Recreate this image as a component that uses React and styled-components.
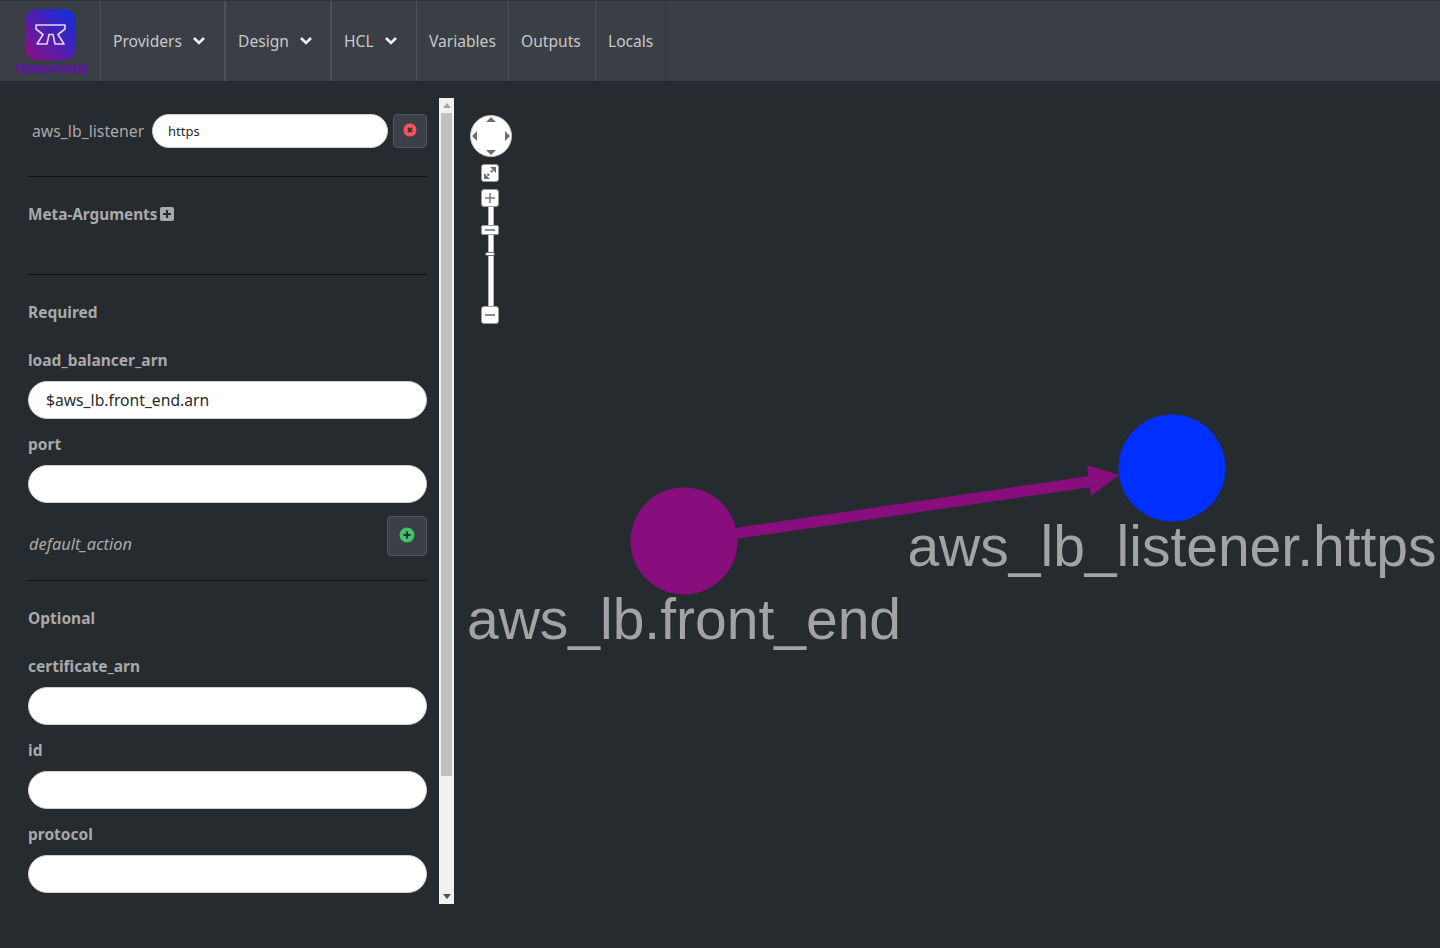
import React from "react";
import styled, { createGlobalStyle } from "styled-components";

const Global = createGlobalStyle`
  html, body {
    margin: 0;
    height: 100%;
    background: #262b2f;
    overflow: hidden;
  }
  * { box-sizing: border-box; }
  body, input {
    font-family: "Noto Sans", "Open Sans", sans-serif;
  }
`;

const Page = styled.div`
  width: 1440px;
  height: 948px;
  display: flex;
  flex-direction: column;
`;

const Navbar = styled.nav`
  height: 82px;
  flex: none;
  display: flex;
  background: #3a3f46;
  border-top: 1px solid #2f3338;
  border-bottom: 1px solid #23272b;
  padding-left: 1px;
`;

const Brand = styled.div`
  width: 99px;
  display: flex;
  flex-direction: column;
  align-items: flex-start;
  padding: 8px 0 0 24px;
`;

const BrandName = styled.div`
  font-family: "Liberation Sans", sans-serif;
  font-size: 10.5px;
  font-weight: 700;
  line-height: 10px;
  color: #5f14a8;
  -webkit-text-stroke: 0.4px #5f14a8;
  margin: 4px 0 0 -10px;
  white-space: nowrap;
`;

const NavItem = styled.div`
  width: ${p => p.$w}px;
  flex: none;
  display: flex;
  align-items: center;
  gap: 10px;
  padding-left: 12px;
  border-left: ${p => (p.$thick ? 2 : 1)}px solid #4d5259;
  font-size: 15.6px;
  color: #c8c8c8;
  &:last-child {
    border-right: 1px solid #33373c;
  }
`;

const Main = styled.div`
  flex: 1;
  display: flex;
  min-height: 0;
`;

const SideColumn = styled.div`
  width: 454px;
  flex: none;
  padding: 16px 0 44px 28px;
  display: flex;
  gap: 12px;
`;

const Side = styled.div`
  width: 399px;
  flex: none;
  overflow: hidden;
  padding-top: 16px;
`;

const ScrollBar = styled.div`
  width: 15px;
  flex: none;
  display: flex;
  flex-direction: column;
  background: #f1f1f1;
`;

const ScrollArrow = styled.div`
  height: 15px;
  flex: none;
  display: flex;
  align-items: center;
  justify-content: center;
`;

const ScrollThumb = styled.div`
  height: 663px;
  margin: 0 2px;
  background: #c1c1c1;
`;

const ScrollRest = styled.div`
  flex: 1;
`;

const NameRow = styled.div`
  display: flex;
  align-items: center;
  height: 34px;
  padding-left: 4px;
`;

const NameLabel = styled.label`
  font-size: 15.8px;
  color: #a9a9a9;
  width: 120px;
  flex: none;
`;

const NameInput = styled.input`
  width: 236px;
  height: 34px;
  border: 1px solid #cfcfcf;
  border-radius: 17px;
  background: #fff;
  padding: 0 15px;
  font-size: 13px;
  color: #272b30;
  outline: none;
`;

const SquareButton = styled.button`
  width: ${p => p.$size}px;
  height: ${p => p.$size}px;
  flex: none;
  display: flex;
  align-items: center;
  justify-content: center;
  margin-left: auto;
  padding: 0 0 2px;
  border: 1px solid #52565e;
  border-radius: 4px;
  background: #3a3f48;
`;

const Rule = styled.hr`
  border: 0;
  height: 1px;
  background: #0e1012;
  margin: ${p => p.$top}px 0 0;
`;

const MetaRow = styled.div`
  display: flex;
  align-items: center;
  gap: 3px;
  margin-top: 26px;
  height: 22px;
  font-size: 15.3px;
  font-weight: 700;
  color: #a9a9a9;
`;

const SectionTitle = styled.div`
  margin-top: ${p => p.$top}px;
  height: 22px;
  line-height: 22px;
  font-size: 15.5px;
  font-weight: 700;
  color: #a9a9a9;
`;

const Field = styled.div`
  margin-top: ${p => p.$top}px;
`;

const FieldLabel = styled.label`
  display: block;
  height: 22px;
  line-height: 22px;
  font-size: 15.5px;
  font-weight: 700;
  color: #a9a9a9;
`;

const FieldInput = styled.input`
  display: block;
  width: 100%;
  height: 38px;
  margin-top: 10px;
  border: 1px solid #cfcfcf;
  border-radius: 19px;
  background: #fff;
  padding: 0 17px;
  font-size: 15.7px;
  color: #272b30;
  outline: none;
`;

const BlockRow = styled.div`
  display: flex;
  justify-content: space-between;
  margin-top: 13px;
`;

const BlockLabel = styled.span`
  padding-top: 16px;
  padding-left: 1px;
  font-size: 16.4px;
  font-style: italic;
  color: #a9a9a9;
`;

const Canvas = styled.div`
  flex: 1;
  position: relative;
  min-width: 0;
`;

const GraphSvg = styled.svg`
  display: block;
  width: 100%;
  height: 100%;
`;

const NavigatorBox = styled.div`
  position: absolute;
  left: 16px;
  top: 33px;
  width: 42px;
  display: flex;
  flex-direction: column;
  align-items: center;
`;

const Pad = styled.svg`
  display: block;
`;

const ZoomColumn = styled.div`
  width: 18px;
  margin-right: 2px;
  display: flex;
  flex-direction: column;
`;

const ZoomBtn = styled.div`
  width: 18px;
  height: 18px;
  background: #fff;
  border: 1px solid #9a9a9a;
  border-radius: 3px;
  display: flex;
  align-items: center;
  justify-content: center;
  position: relative;
  z-index: 1;
  margin-top: ${p => p.$top || 0}px;
`;

const ZoomTrack = styled.div`
  position: relative;
  width: 18px;
  height: 101px;
  margin: -1px 0;
  &::before {
    content: "";
    position: absolute;
    left: 7px;
    top: 0;
    bottom: 0;
    width: 4px;
    background: #fff;
    border-left: 1px solid #b0b0b0;
    border-right: 1px solid #b0b0b0;
  }
`;

const ZoomMark = styled.div`
  position: absolute;
  left: 0;
  top: 19px;
  width: 18px;
  height: 10px;
  background: #fff;
  border: 1px solid #9a9a9a;
  border-radius: 2px;
  display: flex;
  align-items: center;
  justify-content: center;
`;

const ZoomHandle = styled.div`
  position: absolute;
  left: 4px;
  top: 46px;
  width: 10px;
  height: 4px;
  background: #fff;
  border: 1px solid #6f6f6f;
  border-radius: 2px;
`;

const Dash = styled.div`
  width: 10px;
  height: 2px;
  background: #8c8c8c;
`;

const CrossIcon = ({ bg, plus, size = 16 }) => (
  <svg width={size} height={size} viewBox="0 0 16 16">
    <circle cx="8" cy="8" r="7.5" fill={bg} />
    <path
      d={plus ? "M8 4.5v7M4.5 8h7" : "M5.7 5.7l4.6 4.6M10.3 5.7l-4.6 4.6"}
      stroke="#2b2f36"
      strokeWidth="2"
    />
  </svg>
);

const Chevron = () => (
  <svg width="14" height="10" viewBox="0 0 14 10">
    <path d="M2 2l5 5 5-5" fill="none" stroke="#f2f2f2" strokeWidth="2.6" />
  </svg>
);

const PlusSquare = () => (
  <svg width="14" height="14" viewBox="0 0 14 14">
    <rect width="14" height="14" rx="2" fill="#a9a9a9" />
    <path d="M7 3v8M3 7h8" stroke="#272b30" strokeWidth="2.2" />
  </svg>
);

const Triangle = ({ up, color }) => (
  <svg width="8" height="5" viewBox="0 0 8 5">
    <polygon points={up ? "4,0 8,5 0,5" : "0,0 8,0 4,5"} fill={color} />
  </svg>
);

const Logo = () => (
  <svg width="51" height="51" viewBox="0 0 51 51">
    <defs>
      <linearGradient id="logoGrad" x1="1" y1="0" x2="0" y2="1">
        <stop offset="0" stopColor="#0b2fe0" />
        <stop offset="1" stopColor="#8e1183" />
      </linearGradient>
    </defs>
    <rect width="51" height="51" rx="12" fill="url(#logoGrad)" />
    <path
      d="M11 16H40V20L33 25.500L39 35H30L28 25.500H24L22 35H12L18 25.500L11 20Z"
      fill="none"
      stroke="#e6d2f2"
      strokeWidth="1.6"
      strokeLinejoin="round"
    />
  </svg>
);

const fieldsOptional = ["id", "protocol"];

const navItems = [
  { label: "Providers", w: 124, menu: true },
  { label: "Design", w: 106, menu: true, thick: true },
  { label: "HCL", w: 86, menu: true, thick: true },
  { label: "Variables", w: 92 },
  { label: "Outputs", w: 87 },
  { label: "Locals", w: 71 }
];

const App = () => (
  <Page>
    <Global />
    <Navbar>
      <Brand>
        <Logo />
        <BrandName>TERRAFORGE</BrandName>
      </Brand>
      {navItems.map(item => (
        <NavItem key={item.label} $w={item.w} $thick={item.thick}>
          {item.label}
          {item.menu && <Chevron />}
        </NavItem>
      ))}
    </Navbar>
    <Main>
      <SideColumn>
        <Side>
          <NameRow>
            <NameLabel>aws_lb_listener</NameLabel>
            <NameInput defaultValue="https" />
            <SquareButton $size={34}>
              <CrossIcon bg="#f5535e" size={14} />
            </SquareButton>
          </NameRow>
          <Rule $top={28} />
          <MetaRow>
            Meta-Arguments <PlusSquare />
          </MetaRow>
          <Rule $top={49} />
          <SectionTitle $top={26}>Required</SectionTitle>
          <Field $top={26}>
            <FieldLabel>load_balancer_arn</FieldLabel>
            <FieldInput defaultValue="$aws_lb.front_end.arn" />
          </Field>
          <Field $top={14}>
            <FieldLabel>port</FieldLabel>
            <FieldInput />
          </Field>
          <BlockRow>
            <BlockLabel>default_action</BlockLabel>
            <SquareButton $size={40}>
              <CrossIcon bg="#3fc566" plus />
            </SquareButton>
          </BlockRow>
          <Rule $top={24} />
          <SectionTitle $top={26}>Optional</SectionTitle>
          <Field $top={26}>
            <FieldLabel>certificate_arn</FieldLabel>
            <FieldInput />
          </Field>
          {fieldsOptional.map(name => (
            <Field key={name} $top={14}>
              <FieldLabel>{name}</FieldLabel>
              <FieldInput />
            </Field>
          ))}
        </Side>
        <ScrollBar>
          <ScrollArrow>
            <Triangle up color="#a3a3a3" />
          </ScrollArrow>
          <ScrollThumb />
          <ScrollRest />
          <ScrollArrow>
            <Triangle color="#505050" />
          </ScrollArrow>
        </ScrollBar>
      </SideColumn>
      <Canvas>
        <GraphSvg viewBox="454 82 986 866">
          <line x1="684" y1="541" x2="1094" y2="481" stroke="#870e7c" strokeWidth="11" />
          <polygon points="1119,475 1087,465 1091,496" fill="#870e7c" />
          <circle cx="684" cy="541" r="53.500" fill="#870e7c" />
          <circle cx="1172" cy="468" r="53.500" fill="#0030ff" />
          <text x="684" y="638.500" textAnchor="middle" fontFamily="Liberation Sans" fontSize="57" fill="#a3a3a3">
            aws_lb.front_end
          </text>
          <text x="1172" y="565.500" textAnchor="middle" fontFamily="Liberation Sans" fontSize="57" fill="#a3a3a3">
            aws_lb_listener.https
          </text>
        </GraphSvg>
        <NavigatorBox>
          <Pad width="42" height="42" viewBox="0 0 42 42">
            <circle cx="21" cy="21" r="20.500" fill="#fff" stroke="#c0c0c0" />
            <path
              d="M21 2l5 5H16zM21 40l5-5H16zM2 21l5-5v10zM40 21l-5-5v10z"
              fill="#6e6e6e"
            />
          </Pad>
          <ZoomColumn>
            <ZoomBtn $top={7}>
              <svg width="12" height="12" viewBox="0 0 12 12">
                <path d="M12 0H6L12 6zM0 12H6L0 6z" fill="#6e6e6e" />
                <path d="M8.500 3.500L7 5M3.500 8.500L5 7" stroke="#6e6e6e" strokeWidth="2.400" />
              </svg>
            </ZoomBtn>
            <ZoomBtn $top={7}>
              <svg width="12" height="12" viewBox="0 0 12 12">
                <path d="M6 1v10M1 6h10" stroke="#7a7a7a" strokeWidth="1.500" />
              </svg>
            </ZoomBtn>
            <ZoomTrack>
              <ZoomMark>
                <Dash />
              </ZoomMark>
              <ZoomHandle />
            </ZoomTrack>
            <ZoomBtn>
              <Dash />
            </ZoomBtn>
          </ZoomColumn>
        </NavigatorBox>
      </Canvas>
    </Main>
  </Page>
);

export default App;
